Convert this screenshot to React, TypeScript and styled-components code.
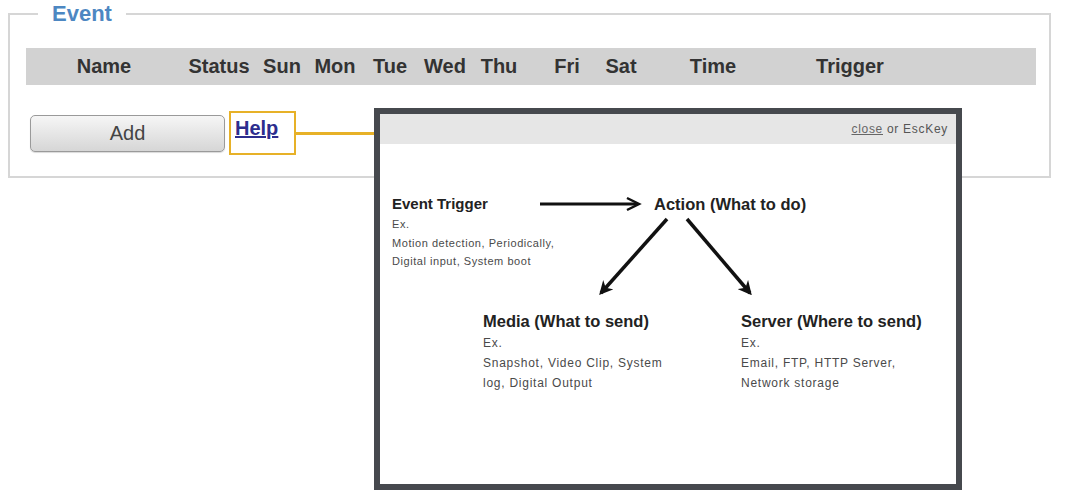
import React, { FC } from "react";
import styled, { createGlobalStyle } from "styled-components";

const GlobalStyle = createGlobalStyle`
  html, body {
    margin: 0;
    padding: 0;
    background: #fff;
  }
  body {
    font-family: "Liberation Sans", Arial, sans-serif;
  }
`;

const Page = styled.div`
  position: relative;
  width: 1079px;
  height: 492px;
  padding: 1px 0 0 8px;
  box-sizing: border-box;
  overflow: hidden;
`;

const EventFieldset = styled.fieldset`
  box-sizing: border-box;
  width: 1043px;
  margin: 0;
  padding: 0 13px 21px 16px;
  border: 2px solid #d6d6d6;
`;

const Legend = styled.legend`
  margin-left: 12px;
  padding: 0 14px;
  font-size: 22px;
  line-height: 26px;
  font-weight: bold;
  color: #4d87c2;
`;

const HeaderBar = styled.div`
  display: flex;
  align-items: center;
  height: 37px;
  margin-top: 21px;
  background: #d2d2d2;
`;

interface CellProps {
  $w: number;
}

const HeaderCell = styled.div<CellProps>`
  display: flex;
  justify-content: center;
  flex: none;
  width: ${(p) => p.$w}px;
  font-size: 20px;
  font-weight: bold;
  color: #333;
  white-space: nowrap;
`;

const Controls = styled.div`
  display: flex;
  align-items: center;
  margin-top: 26px;
  padding-left: 4px;
`;

const AddButton = styled.button`
  box-sizing: border-box;
  width: 195px;
  height: 37px;
  border: 1px solid #9a9a9a;
  border-radius: 5px;
  background: linear-gradient(#f6f6f6, #d6d6d6);
  box-shadow: 0 1px 1px rgba(0, 0, 0, 0.15);
  font-family: "Liberation Sans", Arial, sans-serif;
  font-size: 20px;
  color: #444;
`;

const HelpBox = styled.div`
  box-sizing: border-box;
  width: 67px;
  height: 44px;
  margin-left: 4px;
  padding: 4px 0 0 4px;
  border: 2px solid #e7b128;
`;

const HelpLink = styled.a`
  font-size: 20px;
  font-weight: bold;
  color: #2d2d8e;
  text-decoration: underline;
`;

const Connector = styled.div`
  width: 80px;
  height: 3px;
  background: #e7b128;
`;

const Dialog = styled.div`
  position: absolute;
  left: 374px;
  top: 108px;
  width: 588px;
  height: 382px;
  box-sizing: border-box;
  border: 6px solid #46494e;
  background: #fff;
`;

const DialogHeader = styled.div`
  display: flex;
  justify-content: flex-end;
  align-items: center;
  height: 30px;
  padding-right: 8px;
  background: #e6e6e6;
  font-size: 12px;
  letter-spacing: 0.7px;
  color: #555;

  a {
    color: #666;
    text-decoration: underline;
    margin-right: 4px;
  }
`;

const Diagram = styled.div`
  padding: 51px 0 0 12px;
`;

const Row = styled.div`
  display: flex;
  align-items: flex-start;
`;

interface TitleProps {
  $size: number;
}

const Title = styled.div<TitleProps>`
  font-size: ${(p) => p.$size}px;
  line-height: 18px;
  font-weight: bold;
  color: #222;
  white-space: nowrap;
`;

const TriggerTitle = styled(Title)`
  width: 146px;
`;

const ActionTitle = styled(Title)`
  margin-left: 12px;
`;

const Details = styled.div`
  flex: none;
  width: 198px;
  margin-top: 2px;
  font-size: 11px;
  letter-spacing: 0.55px;
  line-height: 18.5px;
  color: #4a4a4a;
  white-space: nowrap;
`;

const TargetsRow = styled.div`
  display: flex;
  margin: 11px 0 0 91px;
`;

const TargetBlock = styled.div`
  flex: none;
  width: 258px;

  &:last-child {
    width: auto;
  }
`;

const TargetDetails = styled.div`
  margin-top: 3px;
  font-size: 12px;
  letter-spacing: 0.75px;
  line-height: 20px;
  color: #4a4a4a;
  white-space: nowrap;
`;

const columns: [string, number][] = [
  ["Name", 156],
  ["Status", 74],
  ["Sun", 52],
  ["Mon", 54],
  ["Tue", 56],
  ["Wed", 54],
  ["Thu", 54],
  ["Fri", 82],
  ["Sat", 26],
  ["Time", 158],
  ["Trigger", 116],
];

const RightArrow: FC = () => (
  <svg width="104" height="18" viewBox="0 0 104 18">
    <line x1="2" y1="9" x2="100" y2="9" stroke="#111" strokeWidth="3" />
    <polyline
      points="89,3 101,9 89,15"
      fill="none"
      stroke="#111"
      strokeWidth="2.5"
    />
  </svg>
);

const SplitArrows: FC = () => (
  <svg width="172" height="88" viewBox="0 0 172 88">
    <defs>
      <marker
        id="head"
        viewBox="0 0 10 10"
        refX="8"
        refY="5"
        markerWidth="4"
        markerHeight="4"
        orient="auto"
      >
        <path d="M0,0 L10,5 L0,10 L3,5 Z" fill="#111" />
      </marker>
    </defs>
    <line
      x1="77"
      y1="6"
      x2="11"
      y2="80"
      stroke="#111"
      strokeWidth="3.5"
      markerEnd="url(#head)"
    />
    <line
      x1="97"
      y1="6"
      x2="160"
      y2="80"
      stroke="#111"
      strokeWidth="3.5"
      markerEnd="url(#head)"
    />
  </svg>
);

const App: FC = () => {
  const headerCells = columns.map(([label, w]) => (
    <HeaderCell key={label} $w={w}>
      {label}
    </HeaderCell>
  ));

  return (
    <Page>
      <GlobalStyle />
      <EventFieldset>
        <Legend>Event</Legend>
        <HeaderBar>{headerCells}</HeaderBar>
        <Controls>
          <AddButton>Add</AddButton>
          <HelpBox>
            <HelpLink href="#">Help</HelpLink>
          </HelpBox>
          <Connector />
        </Controls>
      </EventFieldset>

      <Dialog>
        <DialogHeader>
          <a href="#">close</a> or EscKey
        </DialogHeader>
        <Diagram>
          <Row>
            <TriggerTitle $size={15}>Event Trigger</TriggerTitle>
            <RightArrow />
            <ActionTitle $size={16.5}>Action (What to do)</ActionTitle>
          </Row>
          <Row>
            <Details>
              Ex.
              <br />
              Motion detection, Periodically,
              <br />
              Digital input, System boot
            </Details>
            <SplitArrows />
          </Row>
          <TargetsRow>
            <TargetBlock>
              <Title $size={16.5}>Media (What to send)</Title>
              <TargetDetails>
                Ex.
                <br />
                Snapshot, Video Clip, System
                <br />
                log, Digital Output
              </TargetDetails>
            </TargetBlock>
            <TargetBlock>
              <Title $size={16.5}>Server (Where to send)</Title>
              <TargetDetails>
                Ex.
                <br />
                Email, FTP, HTTP Server,
                <br />
                Network storage
              </TargetDetails>
            </TargetBlock>
          </TargetsRow>
        </Diagram>
      </Dialog>
    </Page>
  );
};

export default App;
